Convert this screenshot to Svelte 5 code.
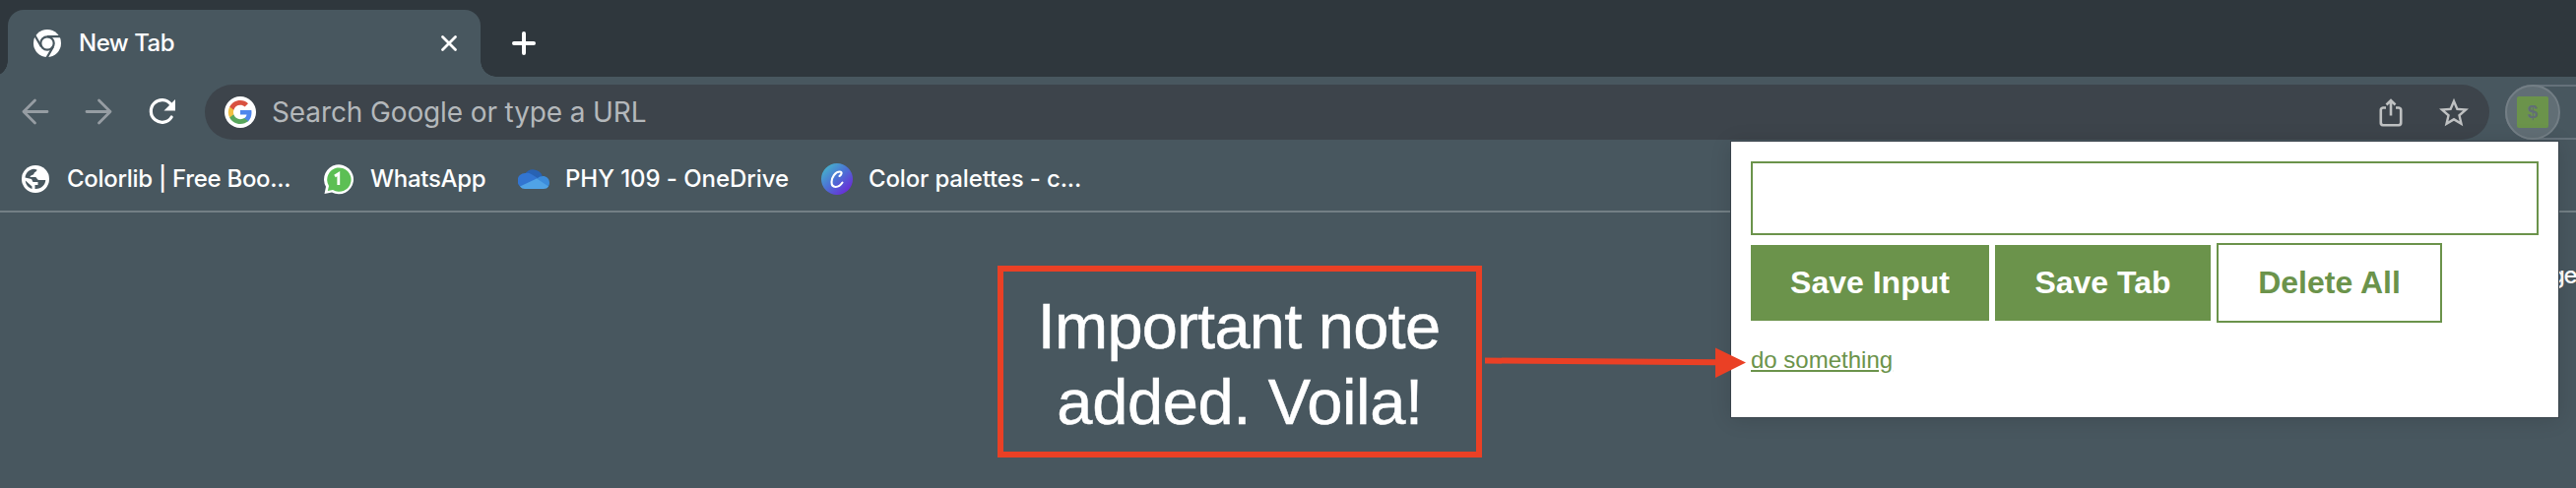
<script>
  const bookmarks = [
    { icon: 'globe', label: 'Colorlib | Free Boo...', width: 226, spacing: -0.3 },
    { icon: 'whatsapp', label: 'WhatsApp', width: 116, spacing: -0.3 },
    { icon: 'cloud', label: 'PHY 109 - OneDrive', width: 226, spacing: -0.06 },
    { icon: 'canva', label: 'Color palettes - c...', width: 215, spacing: -0.15 }
  ];
</script>

<div class="browser">
  <div class="tabstrip">
    <div class="tab">
      <svg class="tab-icon" width="28" height="32" viewBox="0 0 28 32">
        <circle cx="14" cy="16" r="14" fill="#fff" />
        <circle cx="14" cy="16" r="6.7" fill="none" stroke="#48575f" stroke-width="2.2" />
        <path d="M14 9.1H27M8 19.5L1.5 8.2M20 19.5L13.6 30.6" fill="none" stroke="#48575f" stroke-width="2.2" />
      </svg>
      <span class="tab-title">New Tab</span>
      <svg class="close" width="18" height="18" viewBox="0 0 18 18"><path d="M2.500 2.500L15.500 15.500M15.500 2.500L2.500 15.500" stroke="#fff" stroke-width="2.800" stroke-linecap="round" /></svg>
      <i class="foot left"></i><i class="foot right"></i>
    </div>
    <svg class="plus" width="24" height="24" viewBox="0 0 24 24"><path d="M12 2V22M2 12H22" stroke="#fff" stroke-width="4" stroke-linecap="round" /></svg>
  </div>

  <div class="toolbar">
    <svg class="nav" width="208" height="56" viewBox="0 0 208 56">
      <g fill="none" stroke="#969da3" stroke-width="2.8" stroke-linecap="round" stroke-linejoin="round">
        <path d="M48 27.5H24M35.5 16L24 27.5L35.5 39" />
        <path d="M88 27.5H112M100.500 16L112 27.5L100.500 39" />
      </g>
      <path d="M173.500 20A11.300 11.300 0 1 0 174.200 33" fill="none" stroke="#fff" stroke-width="3.2" stroke-linecap="round" />
      <path d="M178 15V26.500H166.500Z" fill="#fff" />
    </svg>
    <div class="omnibox">
      <svg width="32" height="32" viewBox="0 0 32 32">
        <circle cx="16" cy="16" r="16" fill="#fff" />
        <g transform="translate(4 4)">
          <path fill="#4f86ec" d="M23.500 12.300c0-.9-.1-1.600-.2-2.300H12v4.600h6.500c-.3 1.600-1.200 2.900-2.500 3.700v3.100h4c2.300-2.200 3.500-5.300 3.500-9.100z" />
          <path fill="#58a65c" d="M12 24c3.200 0 6-1.100 8-2.900l-4-3.100c-1.100.7-2.400 1.200-4 1.200-3.100 0-5.800-2.100-6.700-4.900H1.200v3.200C3.200 21.400 7.300 24 12 24z" />
          <path fill="#f1bf42" d="M5.300 14.300a7.300 7.300 0 0 1 0-4.600V6.500H1.200a12 12 0 0 0 0 11z" />
          <path fill="#d95140" d="M12 4.800c1.800 0 3.300.6 4.600 1.800L20 3.200C17.900 1.200 15.200 0 12 0 7.300 0 3.200 2.700 1.200 6.500l4.100 3.200C6.200 6.800 8.900 4.800 12 4.800z" />
        </g>
      </svg>
      <span class="placeholder">Search Google or type a URL</span>
      <svg class="share" width="24" height="30" viewBox="0 0 24 30">
        <path d="M7 10.500H4A2.500 2.500 0 0 0 1.800 13V25.500A2.500 2.500 0 0 0 4 28.200H20A2.500 2.500 0 0 0 22.200 25.500V13A2.500 2.500 0 0 0 20 10.500H17M12 18.500V3M7.500 7.500L12 3L16.500 7.500" fill="none" stroke="#bfc1c2" stroke-width="2.600" />
      </svg>
      <svg class="star" width="30" height="30" viewBox="2 1.500 20 20">
        <path fill="#bfc1c2" d="M22 9.240l-7.190-.62L12 2 9.190 8.630 2 9.240l5.460 4.730L5.820 21 12 17.270 18.180 21l-1.630-7.030L22 9.240zM12 15.400l-3.760 2.270 1-4.280-3.320-2.880 4.380-.38L12 6.100l1.710 4.040 4.380.38-3.320 2.880 1 4.280L12 15.400z" />
      </svg>
    </div>
    <div class="extensions">
      <div class="extension"><span>$</span></div>
    </div>
  </div>

  <div class="bookmarks">
    {#each bookmarks as b}
      <div class="bookmark">
        <svg width="32" height="32" viewBox="0 0 32 32">
          {#if b.icon === 'globe'}
            <circle cx="16" cy="16" r="14" fill="#fff" />
            <path d="M5.500 14.500C6 10 9.500 6.200 14.500 5.800L17.500 6.500C17.500 9 15 8.200 14.500 10.500C14 12.500 11 11.500 10.500 14H16C17.500 14 17.500 17 19.500 17H26.300C26 22 21.500 26.500 15.500 26V22H18.500V19H13.500L12 16Z" fill="#48575f" />
            <path d="M5.800 17.500L12.500 23.500V26C9 25 6 21.500 5.800 17.500Z" fill="#48575f" />
          {:else if b.icon === 'whatsapp'}
            <g transform="translate(-1 0)">
              <path d="M2.500 31L4 23.700A15 15 0 1 1 10 29.500Z" fill="#fff" />
              <path d="M5.800 28L7 23A12.200 12.200 0 1 1 11 27Z" fill="#5cbf54" />
              <path d="M13 13L16.800 10.500V22" fill="none" stroke="#fff" stroke-width="2.800" />
            </g>
          {:else if b.icon === 'cloud'}
            <path d="M7 11A10 10 0 0 1 24.800 12.800L16 18Z" fill="#2862b3" />
            <path d="M7 25.500A7.500 7.500 0 0 1 7.500 10C11 9 13 10.500 20 15L9 26Z" fill="#3275d1" />
            <path d="M18 16L20 15C23.500 11.500 32 12 32 20C32 22 31 24 29.500 24.800Z" fill="#3c8cdb" />
            <path d="M2 23.500L19 15.500L31 23.500Q29.500 26 26 26H7Q4 26 2 23.500Z" fill="#50a3e6" />
          {:else}
            <defs><linearGradient id="canva" x1="0.100" y1="0.100" x2="0.850" y2="0.900"><stop offset="0" stop-color="#46b4cc" /><stop offset=".5" stop-color="#4c70d5" /><stop offset="1" stop-color="#6b2bd7" /></linearGradient></defs>
            <circle cx="16" cy="16" r="16" fill="url(#canva)" />
            <path d="M18.500 13C21 11.500 21.500 8.500 18.800 8.500C14 8.500 10.500 14.500 10.500 19C10.500 25.500 17.500 25.500 21.500 19.500" fill="none" stroke="#fff" stroke-width="2.100" stroke-linecap="round" />
          {/if}
        </svg>
        <span class="bookmark-label" style="width: {b.width}px; letter-spacing: {b.spacing}px">{b.label}</span>
      </div>
    {/each}
  </div>

  <div class="page"><span>ge</span></div>

  <div class="popup">
    <input aria-label="Input" />
    <div class="actions">
      <button>Save Input</button>
      <button>Save Tab</button>
      <button class="outline">Delete All</button>
    </div>
    <span class="lead">do something</span>
  </div>

  <div class="note"><span class="first">Important note</span><span>added. Voila!</span></div>
  <svg class="arrow" width="268" height="34" viewBox="0 0 268 34">
    <path d="M1 11.500L235 13.200V1.500L266 16.500L235 32V19.200L1 17.500Z" fill="#ea4025" />
  </svg>
</div>

<style>
  :global(body) { background: #48575f; overflow: hidden; }
  * { box-sizing: border-box; }
  svg { display: block; flex: none; }
  .browser { position: relative; display: flex; flex-direction: column; width: 2616px; height: 496px; overflow: hidden; background: #48575f; color: #fff; font-family: Inter, sans-serif; }
  .tabstrip { display: flex; flex: none; height: 78px; padding: 10px 0 0 8px; background: #2f373d; }
  .tab { position: relative; display: flex; align-items: center; width: 480px; height: 68px; padding: 0 23px 0 26px; border-radius: 16px 16px 0 0; background: #48575f; }
  .tab-title { margin-left: 18px; font-size: 24px; font-weight: 500; line-height: 32px; white-space: nowrap; letter-spacing: -.5px; }
  .close { margin-left: auto; }
  .foot { position: absolute; bottom: 0; width: 16px; height: 16px; }
  .foot.left { right: 100%; background: radial-gradient(circle at 0 0, #2f373d 15.500px, #48575f 16px); }
  .foot.right { left: 100%; background: radial-gradient(circle at 100% 0, #2f373d 15.500px, #48575f 16px); }
  .plus { margin: 22px 0 0 32px; }
  .toolbar { display: flex; flex: none; height: 72px; padding-top: 8px; }
  .omnibox { display: flex; flex: none; align-items: center; width: 2320px; height: 56px; padding: 0 21px 0 20px; border-radius: 28px; background: #3d444b; }
  .placeholder { flex: 1; margin-left: 16px; font-size: 28px; letter-spacing: -.12px; color: #b4b8bb; white-space: nowrap; }
  .share { margin-right: 37px; }
  .extensions { width: 100px; height: 56px; margin-left: 16px; flex: none; border: 2px solid #65717a; border-radius: 28px 0 0 28px; }
  .extension { display: flex; align-items: center; justify-content: center; width: 56px; height: 56px; margin: -2px; border: 2px solid #737e85; border-radius: 50%; background: #616e75; }
  .extension span { width: 32px; height: 32px; border-radius: 2px; background: #6b934b; color: #616e75; font: bold 19px/32px "Liberation Sans", sans-serif; text-align: center; }
  .bookmarks { display: flex; flex: none; align-items: center; gap: 34px; height: 66px; padding-left: 20px; border-bottom: 2px solid #737f85; }
  .bookmark { display: flex; align-items: center; }
  .bookmark-label { margin-left: 16px; font-size: 24px; font-weight: 500; line-height: 32px; white-space: nowrap; }
  .page { display: flex; flex: 1; justify-content: flex-end; padding-top: 48px; font-size: 24px; line-height: 32px; font-weight: 500; letter-spacing: -1.500px; white-space: nowrap; }
  .popup { position: absolute; left: 1758px; top: 144px; width: 840px; height: 280px; padding: 20px; background: #fff; box-shadow: 0 0 0 1px #3a444c, 0 2px 20px #0002; font-family: "Liberation Sans", Arial, sans-serif; }
  input { display: block; width: 800px; height: 75px; padding: 10px; border: 2px solid #6b934b; background: #fff; outline: 0; }
  .actions { display: flex; align-items: center; gap: 6px; margin-top: 8px; }
  button { height: 77px; width: 242px; padding: 0; border: 0; background: #6b934b; color: #fff; font: bold 32px "Liberation Sans", Arial, sans-serif; }
  button:nth-child(2) { width: 219px; }
  button.outline { width: 229px; height: 81px; border: 2px solid #6b934b; background: #fff; color: #6b934b; }
  .lead { display: block; margin-top: 24px; color: #6b934b; font-size: 24px; line-height: 28px; text-decoration: underline; text-decoration-thickness: 2px; text-underline-offset: 2px; }
  .note { position: absolute; left: 1013px; top: 270px; display: flex; flex-direction: column; align-items: center; width: 492px; height: 195px; padding-top: 17px; border: 6px solid #ea4025; font: 65px/77px "Liberation Sans", Helvetica, sans-serif; letter-spacing: -.35px; white-space: nowrap; -webkit-text-stroke: .5px #fff; }
  .first { letter-spacing: -.75px; margin-right: 2px; }
  .arrow { position: absolute; left: 1507px; top: 352px; }
</style>
